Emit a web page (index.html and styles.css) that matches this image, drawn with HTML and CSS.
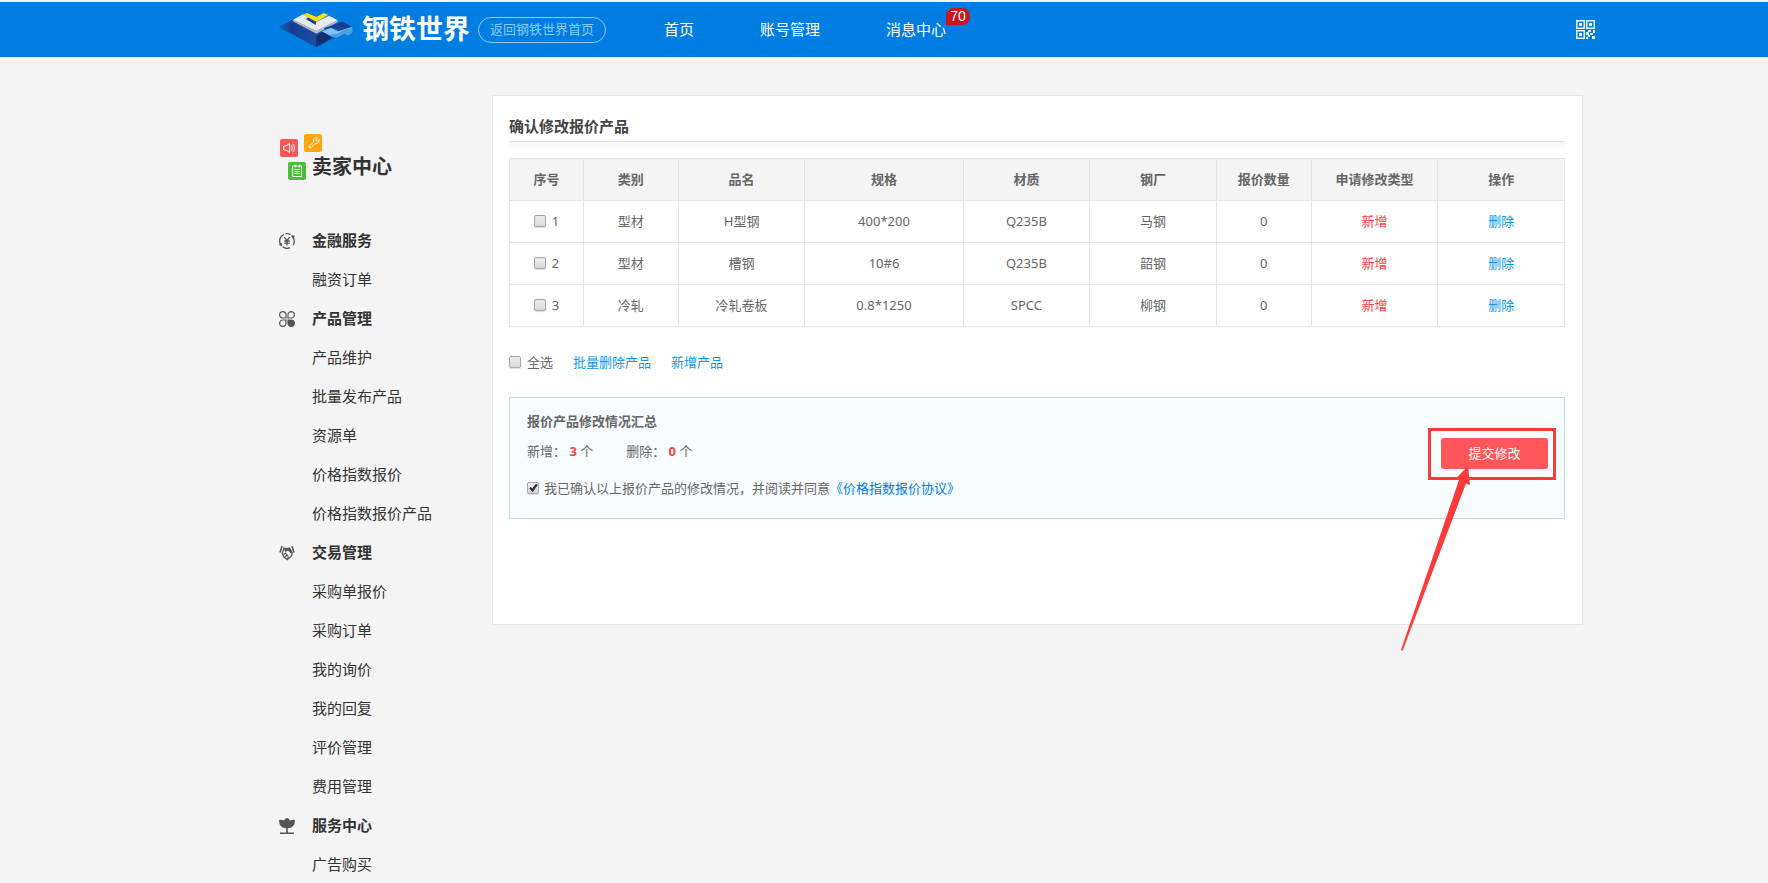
FILE: index.html
```html
<!DOCTYPE html>
<html lang="zh-CN">
<head>
<meta charset="utf-8">
<title>卖家中心</title>
<link rel="stylesheet" href="styles.css">
</head>
<body>
<header class="topbar">
  <a class="brand" href="#">
    <svg class="brand-mark" viewBox="28 34 222 106" aria-hidden="true">
      <defs>
        <linearGradient id="side" x1="0" y1="0" x2="1" y2="0">
          <stop offset="0" stop-color="#1a62bd"/>
          <stop offset="0.35" stop-color="#173c8c"/>
          <stop offset="1" stop-color="#1b4fa6"/>
        </linearGradient>
      </defs>
      <path fill="#1b4a9c" d="M28 78 L72 55 L142 96 L218 62 L246 78 L200 112 L186 112 L140 138 Z"/>
      <path fill="url(#side)" d="M28 78 L68 66 L140 108 V138 Z"/>
      <path fill="#132d70" d="M140 106 L160 92 L190 110 L140 138 Z"/>
      <path fill="#e6e8ec" d="M70 56 L100 40 L138 64 L178 44 L204 58 L140 90 Z"/>
      <path fill="#b4b8c0" d="M70 56 L140 90 L204 58 V63 L140 98 L70 61 Z"/>
      <path fill="#17469c" d="M108 54 L118 49 L140 62 L138 72 Z"/>
      <path fill="#16408e" d="M162 82 L218 62 L246 78 L232 84 L206 76 L176 90 Z"/>
      <path fill="#ffe300" d="M100 41 L112 36 L140 48 L162 36 L176 42 L140 62 Z"/>
      <path fill="#7cc4f5" d="M156 91 L184 80 L206 91 L246 78 L248 82 L236 90 L224 88 L202 102 L190 108 Z"/>
      <path fill="#4a9fe2" d="M176 102 L202 98 L226 86 L248 80 V95 L236 104 L224 98 L198 112 Z"/>
    </svg>
    <span class="brand-name">钢铁世界</span>
  </a>
  <a class="home-pill" href="#">返回钢铁世界首页</a>
  <nav class="main-nav">
    <a href="#">首页</a>
    <a href="#">账号管理</a>
    <a class="with-badge" href="#">消息中心<span class="badge">70</span></a>
  </nav>
  <button class="qr-button" type="button" aria-label="二维码">
    <svg viewBox="0 0 19 19" width="19" height="19" fill="none" stroke="#e8f4ff">
      <g stroke-width="1.5"><path d="M.75.75h7.5v7.5H.75zM10.75.75h7.5v7.5h-7.5zM.75 10.75h7.5v7.5H.75z"/></g>
      <path fill="#e8f4ff" stroke="none" d="M3 3h3v3H3zM13 3h3v3h-3zM3 13h3v3H3zM12 10h3v2h-3zM17 10h2v3h-2zM10 12h3v3h-3zM14 13h3v2h-3zM12 15h2v2h-2zM10 17h2v2h-2zM16 16h3v3h-3z"/>
    </svg>
  </button>
</header>

<div class="page">
  <aside class="sidebar">
    <h1 class="side-title">
      <svg class="side-mark" width="43" height="47" viewBox="0 0 43 47" fill="none" stroke="#fff" stroke-linecap="round" stroke-linejoin="round" aria-hidden="true">
        <g stroke="none">
          <rect x="1" y="5" width="18" height="18" rx="2" fill="#fb5558"/>
          <rect x="25" y="0" width="18" height="18" rx="2" fill="#ffa60f"/>
          <rect x="9" y="28" width="18" height="18" rx="2" fill="#4abf3a"/>
        </g>
        <path d="M5 12h2l3.500-2.500v9L7 16H5zM12.500 11.500q2 2.500 0 5M14 10q3.500 4 0 8"/>
        <path d="M30 12.500l4.500-4.500c-1-3 1.500-5 4-4l-2 2 1.500 1.500 2-2c1 2.500-1.500 5-4 4L31.500 14q-2 .5-1.500-1.500z"/>
        <path d="M14 32h8.500v10.500H14zM16 31v2M20.500 31v2M16 35.500h4.500M16 37.500h4.500M16 39.500h4.500"/>
      </svg>
      卖家中心
    </h1>
    <ul class="menu">
      <li class="group">
        <svg viewBox="0 0 16 16" fill="none" stroke="#555" stroke-width="1.300"><path d="M5 1.300A7.300 7.300 0 0 0 2 12.200M3.500 13.800A7.300 7.300 0 0 0 11 14.700M14 12.200A7.300 7.300 0 0 0 12.700 2.500M6.500.8A7.300 7.300 0 0 1 11.500 1.600M.3 11.500l1.900 1V10M13.800 5.500l-.3-2.500 2 .5M5.200 4.200L8 7.500l2.800-3.300M8 7.500v5M5.200 8h5.600M5.200 10.200h5.600"/></svg>
        <a href="#">金融服务</a></li>
      <li><a href="#">融资订单</a></li>
      <li class="group">
        <svg viewBox="0 0 16 16" fill="none" stroke="#555" stroke-width="1.200"><path d="M7 7H4a3.200 3.200 0 1 1 3-3zM9 7h3a3.200 3.200 0 1 0-3-3zM7 9H4a3.200 3.200 0 1 0 3 3z"/><path fill="#555" d="M9 9h3a3.200 3.200 0 1 1-3 3z"/></svg>
        <a href="#">产品管理</a></li>
      <li><a href="#">产品维护</a></li>
      <li><a href="#">批量发布产品</a></li>
      <li><a href="#">资源单</a></li>
      <li><a href="#">价格指数报价</a></li>
      <li><a href="#">价格指数报价产品</a></li>
      <li class="group">
        <svg viewBox="0 0 16 16" fill="none" stroke="#555"><path stroke-width="1.500" d="M3 1L1 7.500M13 1l2 6.500"/><path fill="#555" stroke="none" d="M5 2.500l3 .5 3-.8L14 8l-1.500 1L9 5.500 6.500 7 5.500 6z"/><path stroke-width="1.200" d="M5 2.500L3.200 8.500 5 12l3.300 2.800L12.500 11l.8-2.500M4.500 9.500l2-1.500 1 1.500M6 12l2-2 1 1.500M8 14l2-2"/></svg>
        <a href="#">交易管理</a></li>
      <li><a href="#">采购单报价</a></li>
      <li><a href="#">采购订单</a></li>
      <li><a href="#">我的询价</a></li>
      <li><a href="#">我的回复</a></li>
      <li><a href="#">评价管理</a></li>
      <li><a href="#">费用管理</a></li>
      <li class="group">
        <svg viewBox="0 0 16 16" fill="#555"><path d="M0 2q3-.5 5 .5Q6 0 8 0t3 2.500q2-1 5-.5 0 8-7.200 8.300V14.500H15V16H1v-1.500h6.200v-4.200Q0 10 0 2z"/></svg>
        <a href="#">服务中心</a></li>
      <li><a href="#">广告购买</a></li>
    </ul>
  </aside>

  <main class="panel">
    <h2 class="panel-title">确认修改报价产品</h2>
    <table class="products">
      <colgroup>
        <col class="w7"><col class="w9"><col class="w12"><col class="w15"><col class="w12"><col class="w12"><col class="w9"><col class="w12"><col>
      </colgroup>
      <thead>
        <tr><th>序号</th><th>类别</th><th>品名</th><th>规格</th><th>材质</th><th>钢厂</th><th>报价数量</th><th>申请修改类型</th><th>操作</th></tr>
      </thead>
      <tbody>
        <tr><td><label class="check"><input type="checkbox">1</label></td><td>型材</td><td>H型钢</td><td>400*200</td><td>Q235B</td><td>马钢</td><td>0</td><td class="added">新增</td><td><a href="#">删除</a></td></tr>
        <tr><td><label class="check"><input type="checkbox">2</label></td><td>型材</td><td>槽钢</td><td>10#6</td><td>Q235B</td><td>韶钢</td><td>0</td><td class="added">新增</td><td><a href="#">删除</a></td></tr>
        <tr><td><label class="check"><input type="checkbox">3</label></td><td>冷轧</td><td>冷轧卷板</td><td>0.8*1250</td><td>SPCC</td><td>柳钢</td><td>0</td><td class="added">新增</td><td><a href="#">删除</a></td></tr>
      </tbody>
    </table>

    <div class="bulk">
      <label class="check"><input type="checkbox">全选</label>
      <a href="#">批量删除产品</a>
      <a href="#">新增产品</a>
    </div>

    <section class="summary">
      <div class="summary-text">
        <h3>报价产品修改情况汇总</h3>
        <p class="counts"><span>新增： <b>3</b> 个</span><span>删除： <b>0</b> 个</span></p>
        <div class="agree">
          <label class="check"><input type="checkbox" checked>我已确认以上报价产品的修改情况，并阅读并同意</label><a href="#">《价格指数报价协议》</a>
        </div>
      </div>
      <div class="submit-area">
        <button class="submit" type="button">提交修改</button>
        <svg class="pointer" width="70" height="186" viewBox="0 0 70 186" aria-hidden="true"><path fill="#fd3a3a" d="M67 0L69 19 65 17.500 1.500 185 0 184 58 14 55 12.500z"/></svg>
      </div>
    </section>
  </main>
</div>
</body>
</html>
```
FILE: styles.css
```css
* {
  box-sizing: border-box;
}

html {
  overflow: hidden;
}

body {
  margin: 0;
  border-top: 2px solid #f4f4f4;
  background: #f4f4f4;
  color: #666;
  font: 13px/20px "Noto Sans", "Noto Sans CJK SC", sans-serif;
}

a {
  color: #0a96ee;
  text-decoration: none;
}

h1,
h2,
h3,
p,
ul {
  margin: 0;
  padding: 0;
}

/* top bar */

.topbar {
  display: flex;
  align-items: center;
  height: 55px;
  padding: 0 173px 0 279px;
  background: #007de1;
}

.topbar a {
  color: #fff;
}

.brand {
  display: flex;
  align-items: center;
  gap: 9px;
}

.brand-mark {
  width: 74px;
  height: 36px;
}

.brand-name {
  padding-bottom: 2px;
  font-size: 27px;
  font-weight: 700;
  line-height: 40px;
}

.topbar .home-pill {
  margin-left: 8px;
  padding: 0 11px 2px;
  border: 1px solid #8ecbf9;
  border-radius: 13px;
  color: #8ecbf9;
  line-height: 22px;
}

.main-nav {
  display: flex;
  gap: 66px;
  margin-left: 58px;
  padding-bottom: 2px;
  font-size: 15px;
}

.with-badge {
  position: relative;
}

.badge {
  position: absolute;
  left: 100%;
  bottom: 14px;
  width: 24px;
  border-radius: 8px 8px 8px 0;
  background: #c8161d;
  font: 14px/17px "Liberation Sans", sans-serif;
  text-align: center;
}

.qr-button {
  display: flex;
  margin-left: auto;
  padding: 0;
  border: 0;
  background: none;
}

/* page */

.page {
  display: flex;
  align-items: flex-start;
  padding: 38px 185px 0 279px;
}

.sidebar {
  flex: none;
  width: 213px;
  padding-top: 39px;
}

.side-title {
  display: flex;
  height: 47px;
  align-items: flex-end;
  color: #333;
  font-size: 20px;
  line-height: 28px;
}

.side-mark {
  flex: none;
  margin-right: -10px;
}

.menu {
  margin-top: 40px;
  list-style: none;
  font-size: 15px;
  line-height: 39px;
}

.menu li {
  display: flex;
  align-items: center;
  padding-left: 33px;
}

.menu .group {
  gap: 17px;
  padding-left: 0;
  font-weight: 700;
}

.menu svg {
  width: 16px;
  height: 16px;
}

.menu a {
  color: #333;
}

.panel {
  flex: 1;
  min-height: 530px;
  padding: 18px 17px 0 16px;
  border: 1px solid #e5e5e5;
  background: #fff;
}

.panel-title {
  color: #444;
  font-size: 15px;
  line-height: 24px;
}

.panel-title::after {
  content: "";
  display: block;
  height: 8px;
  margin-top: 3px;
  border-top: 1px solid #e5e5e5;
  background: linear-gradient(#f5f5f5, #fff);
}

.products {
  width: 100%;
  margin-top: 8px;
  border-collapse: collapse;
  table-layout: fixed;
  text-align: center;
}

.w7 { width: 7%; }
.w9 { width: 9%; }
.w12 { width: 12%; }
.w15 { width: 15%; }

.products th,
.products td {
  height: 42px;
  padding: 0 0 2px;
  border: 1px solid #e5e5e5;
}

.products th {
  background: #f4f4f4;
}

.products .added {
  color: #ff4040;
}

.check {
  display: inline-flex;
  align-items: center;
  gap: 6px;
  vertical-align: middle;
}

.check input {
  flex: none;
  width: 12px;
  height: 12px;
  margin: 0;
  border: 1px solid #a6a6a6;
  border-radius: 2px;
  background: linear-gradient(#ececec, #d9d9d9);
  box-shadow: 0 1px 1px #ddd;
  appearance: none;
}

.check input:checked::before {
  content: "";
  display: block;
  height: 10px;
  background: #333;
  clip-path: polygon(12% 52%, 26% 40%, 42% 56%, 80% 8%, 98% 20%, 46% 92%);
}

.bulk {
  display: flex;
  gap: 20px;
  margin-top: 25px;
}

/* summary */

.summary {
  display: flex;
  align-items: flex-start;
  justify-content: space-between;
  margin-top: 25px;
  padding: 13px 16px 20px 17px;
  border: 1px solid #b9dcf8;
  background: #f7fcff;
}

.summary h3 {
  font-size: 13px;
}

.counts {
  display: flex;
  gap: 33px;
  margin-top: 10px;
}

.counts b {
  color: #ff4040;
}

.agree {
  display: flex;
  margin-top: 17px;
}

.agree .check {
  gap: 5px;
}

.agree a {
  color: #007de1;
}

.submit-area {
  position: relative;
  margin-top: 27px;
}

.submit-area::before {
  content: "";
  position: absolute;
  inset: -10px -8px -11px -13px;
  border: 3px solid #fd3a3a;
  pointer-events: none;
}

.submit {
  display: block;
  width: 107px;
  padding: 0;
  border: 0;
  border-radius: 3px;
  background: #ff5659;
  color: #fff;
  font: inherit;
  line-height: 31px;
}

.pointer {
  position: absolute;
  top: 28px;
  right: 77px;
}
```
